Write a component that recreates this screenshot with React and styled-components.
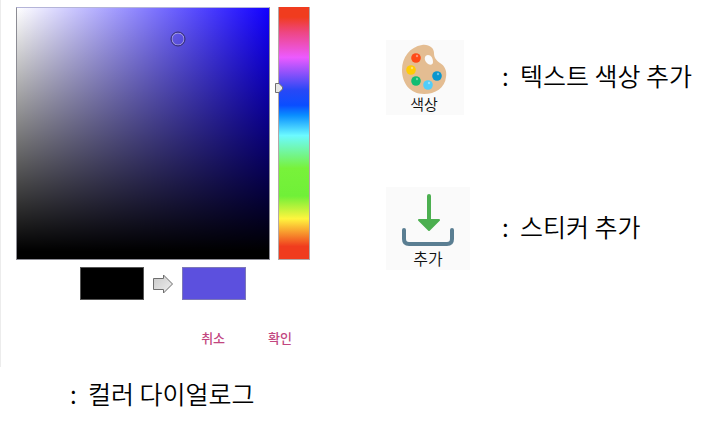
import React, { useState } from 'react';
import styled, { createGlobalStyle } from 'styled-components';

const GlobalStyle = createGlobalStyle`
  * { box-sizing: border-box; }
  body {
    margin: 0;
    background: #fff;
    color: #000;
    font-family: "Noto Sans CJK KR", "Noto Sans", sans-serif;
  }
  button { font-family: inherit; border: 0; padding: 0; cursor: pointer; }
`;

const Page = styled.main`
  display: grid;
  grid-template-columns: 386fr 323fr;
`;

const Column = styled.section`
  display: flex;
  flex-direction: column;
  min-width: 0;
`;

const Tools = styled(Column)`
  padding-top: 40px;
  gap: 72px;
`;

const Dialog = styled.div`
  max-width: 326px;
  padding: 7px 16px 19px 15px;
  border-left: 1px solid #ececec;
`;

const Picker = styled.div`
  display: grid;
  grid-template-columns: minmax(0, 1fr) 32px;
  gap: 8px;
  height: 253px;
`;

const ShadeArea = styled.div`
  position: relative;
  border: 1px solid #8c8c94;
  border-top-color: #b4b4d8;
  background:
    linear-gradient(to bottom, transparent, #000 97%),
    linear-gradient(to right, #fff, #1200ff);
`;

const Ring = styled.span`
  position: absolute;
  width: 15px;
  height: 15px;
  transform: translate(-50%, -50%);
  border: 1px solid #36306c;
  border-radius: 50%;
  box-shadow: inset 0 0 0 1px #a49de0;
`;

const HueStrip = styled.div`
  position: relative;
  border: 1px solid #b5a8a8;
  border-width: 0 1px 1px;
  background: linear-gradient(
    to bottom,
    #f03c1e 0%, #f03c1e 4%, #ee4682 10%, #ec5aff 20%, #2848f6 33%,
    #0a4eff 39%, #0a8eff 43%, #6cfaff 51%, #78f23a 64%, #70f038 75%,
    #fff53e 84%, #f03c1e 95%, #f03c1e 100%
  );
`;

const HueRange = styled.input`
  position: absolute;
  inset: 0;
  width: 100%;
  height: 100%;
  margin: 0;
  opacity: 0;
  writing-mode: vertical-lr;
  cursor: pointer;
`;

const HuePointer = styled.svg`
  position: absolute;
  left: -4px;
  transform: translateY(-50%);
  pointer-events: none;
`;

const Comparison = styled.div`
  display: flex;
  justify-content: center;
  align-items: center;
  gap: 8px;
  margin: 7px 0 28px;
`;

const Swatch = styled.div`
  width: 64px;
  height: 33px;
  border: 1px solid ${(p) => p.$edge};
  background: ${(p) => p.$fill};
`;

const Actions = styled.div`
  display: flex;
  justify-content: flex-end;
  gap: 43px;
  padding-right: 18px;
`;

const TextButton = styled.button`
  background: none;
  color: #c2467f;
  font-size: 13px;
  font-weight: 500;
  line-height: 20px;
`;

const Caption = styled.p`
  margin: 0;
  font-size: 25px;
  font-weight: 350;
  line-height: 36px;
  white-space: pre;
`;

const DialogCaption = styled(Caption)`
  padding: 8px 0 0 70px;
`;

const ToolRow = styled.div`
  display: grid;
  grid-template-columns: 84px 1fr;
  column-gap: 32px;
  align-items: center;

  ${Caption} {
    padding-bottom: 5px;
  }
`;

const ToolButton = styled.button`
  display: flex;
  flex-direction: column;
  align-items: center;
  justify-self: start;
  width: ${(p) => (p.$large ? 84 : 78)}px;
  padding: ${(p) => (p.$large ? '6px 0 0' : '4px 2px 2px 0')};
  background: #fafafa;
  color: #111;
  font-size: ${(p) => (p.$large ? 16 : 15)}px;
  font-weight: 350;
  line-height: ${(p) => (p.$large ? 23 : 18)}px;
`;

const DOTS = [
  [15, 14, '#ff4a17'],
  [10, 26, '#ffcb05'],
  [15, 37, '#10bd72'],
  [27, 41, '#50cdfa'],
  [36, 32, '#0996cf'],
];

function PaletteIcon() {
  return (
    <svg width="46" height="51" viewBox="0 0 46 51" aria-hidden="true">
      <path
        fill="#e4bd92"
        fillRule="evenodd"
        d="M21 1C28 0 33 4 33 9C33 14 35 16 39 19C44 22 46 27 45 33C44 44 34 50 23 50C9 50 1 39 1 26C1 13 9 3 21 1ZM27 11C23.500 11 23 15 25 18C27 21 32 22 32 18C32 14 30 11 27 11Z"
      />
      {DOTS.map(([x, y, fill]) => (
        <g key={fill}>
          <circle cx={x} cy={y} r="4.800" fill={fill} />
          <circle cx={x + 1} cy={y - 2} r="1.200" fill="#fff" opacity=".4" />
        </g>
      ))}
    </svg>
  );
}

function DownloadIcon() {
  return (
    <svg width="54" height="54" viewBox="0 0 54 54" aria-hidden="true">
      <path d="M3 37V46Q3 51 8 51H46Q51 51 51 46V37" fill="none" stroke="#5a7e92" strokeWidth="4" strokeLinecap="round" />
      <path d="M28 3V29" stroke="#4caf50" strokeWidth="4" strokeLinecap="round" />
      <path d="M18 27H38L28 37Z" fill="#4caf50" stroke="#4caf50" strokeWidth="2" strokeLinejoin="round" />
    </svg>
  );
}

function ArrowIcon() {
  return (
    <svg width="22" height="20" viewBox="0 0 22 20" aria-hidden="true">
      <defs>
        <linearGradient id="arrowFill" x1="0" y1="0" x2="1" y2="1">
          <stop offset="0" stopColor="#c8c8c8" />
          <stop offset="1" stopColor="#f0f0f0" />
        </linearGradient>
      </defs>
      <path d="M1.500 4.500H11.500V1L20.500 10L11.500 19V15.500H1.500Z" fill="url(#arrowFill)" stroke="#6e6e6e" />
    </svg>
  );
}

export default function App() {
  const [hue, setHue] = useState(32);
  const [shade, setShade] = useState({ x: 64, y: 12.5 });

  const pickShade = (event) => {
    const box = event.currentTarget.getBoundingClientRect();
    setShade({
      x: ((event.clientX - box.left) / box.width) * 100,
      y: ((event.clientY - box.top) / box.height) * 100,
    });
  };

  return (
    <>
      <GlobalStyle />
      <Page>
        <Column>
          <Dialog role="dialog" aria-label="컬러 다이얼로그">
            <Picker>
              <ShadeArea onPointerDown={pickShade}>
                <Ring style={{ left: `${shade.x}%`, top: `${shade.y}%` }} />
              </ShadeArea>
              <HueStrip>
                <HueRange
                  type="range"
                  min="0"
                  max="100"
                  value={hue}
                  aria-label="색상"
                  onChange={(event) => setHue(Number(event.target.value))}
                />
                <HuePointer width="8" height="11" viewBox="0 0 8 11" style={{ top: `${hue}%` }} aria-hidden="true">
                  <path d="M.5 1H4L7.500 4.500V6.500L4 10H.5Z" fill="#e6e6e6" stroke="#707070" />
                </HuePointer>
              </HueStrip>
            </Picker>
            <Comparison>
              <Swatch $fill="#000" $edge="#555" />
              <ArrowIcon />
              <Swatch $fill="#5c50de" $edge="#7d78b8" />
            </Comparison>
            <Actions>
              <TextButton type="button">취소</TextButton>
              <TextButton type="button">확인</TextButton>
            </Actions>
          </Dialog>
          <DialogCaption>{':  컬러 다이얼로그'}</DialogCaption>
        </Column>
        <Tools>
          <ToolRow>
            <ToolButton type="button">
              <PaletteIcon />
              색상
            </ToolButton>
            <Caption>{':  텍스트 색상 추가'}</Caption>
          </ToolRow>
          <ToolRow>
            <ToolButton type="button" $large>
              <DownloadIcon />
              추가
            </ToolButton>
            <Caption>{':  스티커 추가'}</Caption>
          </ToolRow>
        </Tools>
      </Page>
    </>
  );
}
